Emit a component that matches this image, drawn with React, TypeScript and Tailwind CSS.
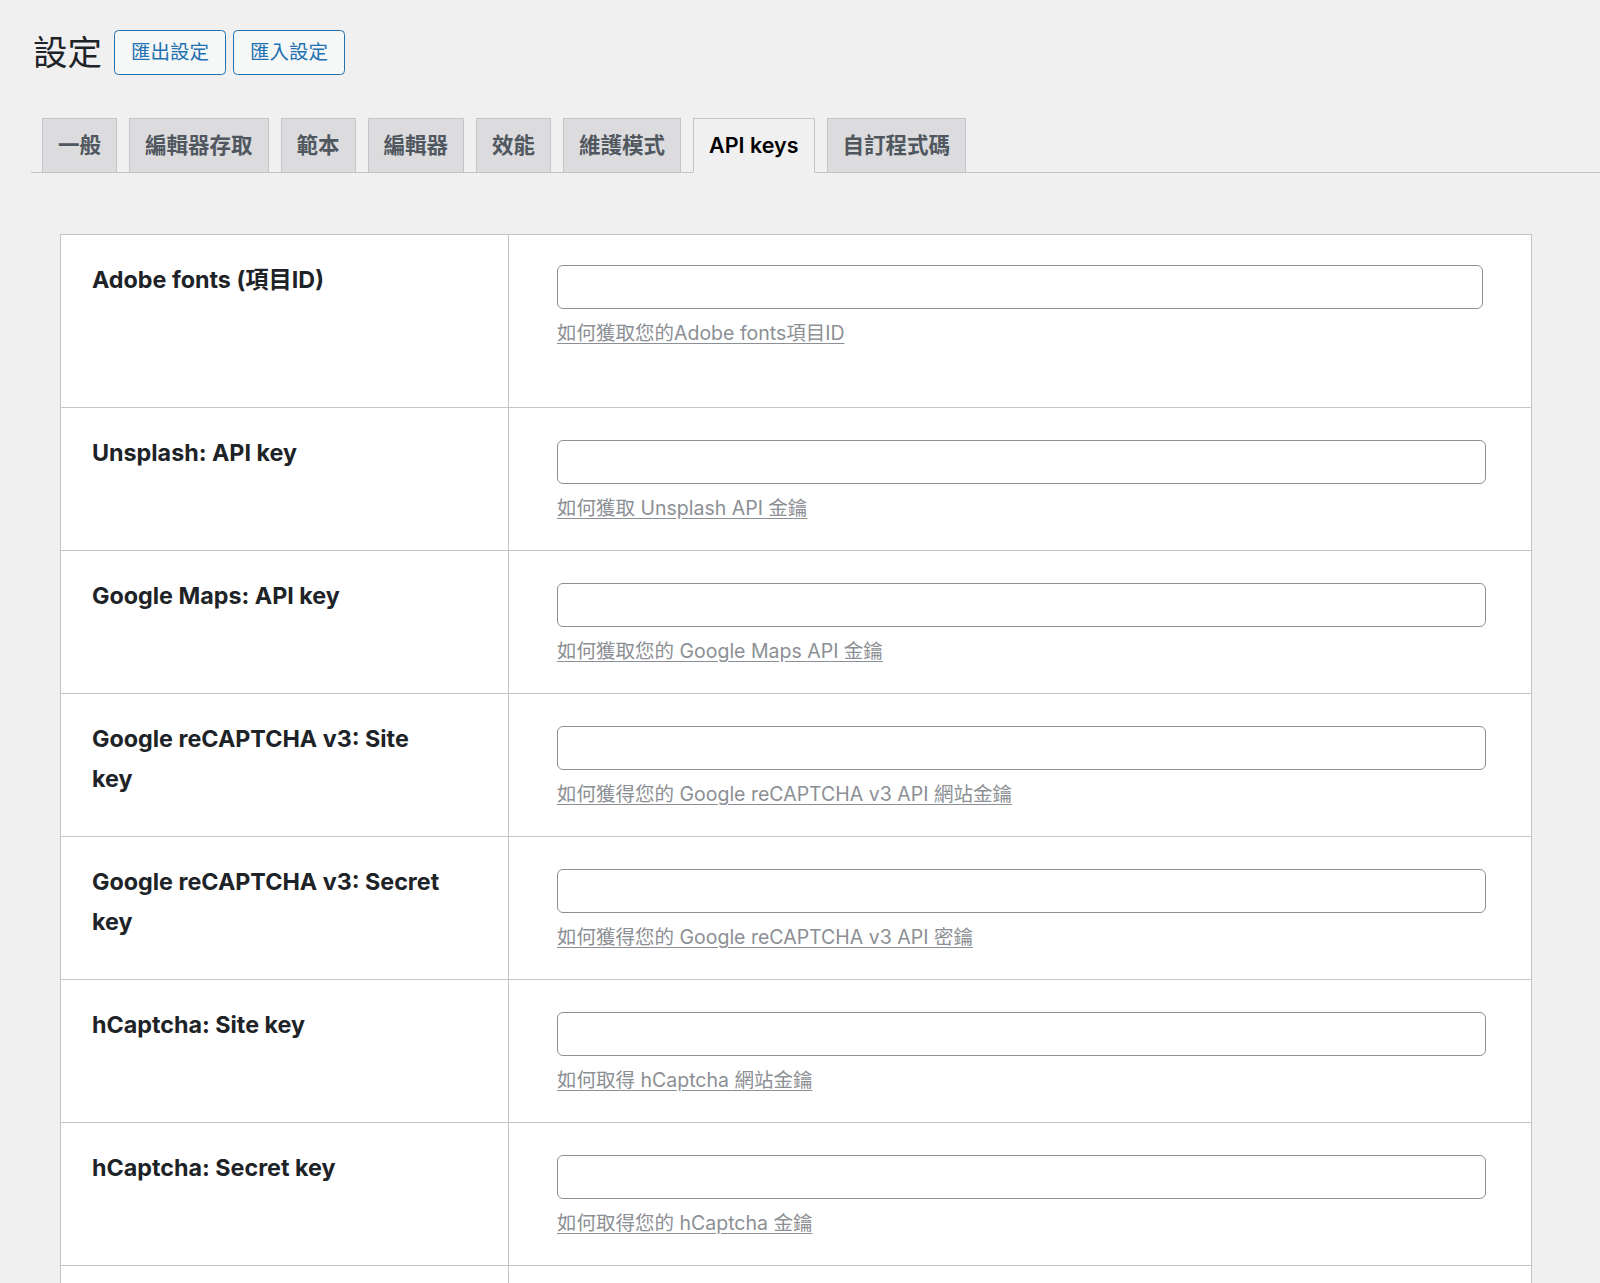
import { useState } from 'react'

const tabs = ['一般', '編輯器存取', '範本', '編輯器', '效能', '維護模式', 'API keys', '自訂程式碼']

const rows = [
  { label: 'Adobe fonts (項目ID)', help: '如何獲取您的Adobe fonts項目ID', tall: true },
  { label: 'Unsplash: API key', help: '如何獲取 Unsplash API 金鑰' },
  { label: 'Google Maps: API key', help: '如何獲取您的 Google Maps API 金鑰' },
  { label: 'Google reCAPTCHA v3: Site key', help: '如何獲得您的 Google reCAPTCHA v3 API 網站金鑰' },
  { label: 'Google reCAPTCHA v3: Secret key', help: '如何獲得您的 Google reCAPTCHA v3 API 密鑰' },
  { label: 'hCaptcha: Site key', help: '如何取得 hCaptcha 網站金鑰' },
  { label: 'hCaptcha: Secret key', help: '如何取得您的 hCaptcha 金鑰' },
  { label: 'Instagram: Access token', help: '如何取得您的 Instagram 存取權杖' },
]

export default function App() {
  const [active, setActive] = useState('API keys')

  return (
    <div className="min-h-screen bg-[#f0f0f1] font-[Inter,'Noto_Sans_CJK_TC',sans-serif] text-[#1d2327]">
      {/* header */}
      <div className="flex items-center pl-[33px] pt-[30px]">
        <h1 className="text-[34.5px] font-normal leading-[45px] mr-[12px]">設定</h1>
        <button className="h-[45px] px-[16px] mr-[7px] border border-[#2271b1] rounded-[4.5px] bg-[#f6f7f7] text-[#2271b1] text-[19.5px]">
          匯出設定
        </button>
        <button className="h-[45px] px-[16px] border border-[#2271b1] rounded-[4.5px] bg-[#f6f7f7] text-[#2271b1] text-[19.5px]">
          匯入設定
        </button>
      </div>

      {/* tabs */}
      <div className="ml-[31px] mt-[43px] flex items-end border-b border-[#c3c4c7] pl-[11px] gap-[12px]">
        {tabs.map((t) => (
          <button
            key={t}
            onClick={() => setActive(t)}
            className={
              t === active
                ? '-mb-px h-[55px] px-[15px] flex items-center border border-[#c3c4c7] border-b-[#f0f0f1] bg-[#f0f0f1] text-black text-[21.5px] font-semibold'
                : '-mb-px h-[55px] px-[15px] flex items-center border border-[#c3c4c7] bg-[#dcdcde] text-[#50575e] text-[21.5px] font-semibold'
            }
          >
            {t}
          </button>
        ))}
      </div>

      {/* settings table */}
      <div className="ml-[60px] mt-[61px] w-[1472px] bg-white border border-[#c3c4c7]">
        {rows.map((r) => (
          <div key={r.label} className="grid grid-cols-[448px_1fr] border-b border-[#c3c4c7]">
            <div className="border-r border-[#c3c4c7] pl-[31px] pr-[62px] pt-[25px] text-[23.3px] leading-[40px] font-bold text-[#1d2327]">
              {r.label}
            </div>
            <div className={r.tall ? 'pl-[48px] pr-[48px] pt-[30px] pb-[60px]' : 'pl-[48px] pr-[45px] pt-[32px] pb-[28px]'}>
              <input
                type="text"
                className="block w-full h-[44px] bg-white border border-[#8c8f94] rounded-[6px] px-3 text-[19.5px] outline-none"
              />
              <a href="#" className="block mt-[10px] text-[19.5px] leading-[28px] text-[#8c8f94] underline underline-offset-[3px] w-fit">
                {r.help}
              </a>
            </div>
          </div>
        ))}
      </div>
    </div>
  )
}
